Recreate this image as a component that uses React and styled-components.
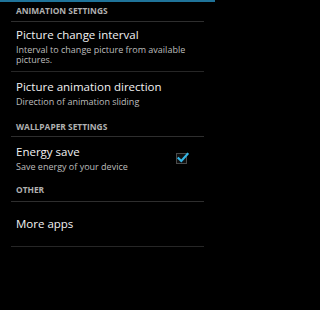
import React from "react";
import styled, { createGlobalStyle } from "styled-components";

const GlobalStyle = createGlobalStyle`
  html, body {
    margin: 0;
    padding: 0;
    background: #000;
  }
  body {
    font-family: "Open Sans", "Noto Sans", sans-serif;
    -webkit-font-smoothing: antialiased;
  }
`;

const Screen = styled.div`
  width: 215px;
  height: 310px;
  background: #000;
  border-top: 2px solid #1f7399;
  box-sizing: border-box;
  overflow: hidden;
`;

// category header with a divider under it
const Category = styled.div`
  margin: 0 11px;
  padding: 4px 5px 0;
  height: ${({ $height }) => $height}px;
  box-sizing: border-box;
  border-bottom: 1px solid #2e2e2e;
  color: #b0b0b0;
  font-size: 8.4px;
  font-weight: 700;
  line-height: 10px;
  white-space: nowrap;
`;

const Item = styled.div`
  margin: 0 11px;
  padding: ${({ $top }) => $top}px 5px 0;
  height: ${({ $height }) => $height}px;
  box-sizing: border-box;
  border-bottom: ${({ $divider }) => ($divider ? "1px solid #262626" : "none")};
  display: flex;
  align-items: flex-start;
  justify-content: space-between;
`;

const Texts = styled.div`
  display: flex;
  flex-direction: column;
`;

const Title = styled.div`
  color: #f2f2f2;
  font-size: 11.5px;
  line-height: 14px;
  white-space: nowrap;
`;

const Summary = styled.div`
  color: #bdbdbd;
  font-size: 9px;
  line-height: 10px;
  margin-top: 3px;
  white-space: nowrap;
`;

const CheckBox = styled.div`
  width: 11px;
  height: 11px;
  box-sizing: border-box;
  border: 1px solid #4a4a4a;
  background: #101010;
  margin: 8.5px 12px 0 0;
  position: relative;
  flex-shrink: 0;
  svg {
    position: absolute;
    left: -1px;
    top: -3px;
  }
`;

export default function App() {
  return (
    <>
      <GlobalStyle />
      <Screen>
        <Category $height={20}>ANIMATION SETTINGS</Category>
        <Item $top={6} $height={50} $divider>
          <Texts>
            <Title>Picture change interval</Title>
            <Summary>
              Interval to change picture from available
              <br />
              pictures.
            </Summary>
          </Texts>
        </Item>
        <Item $top={7.5} $height={46}>
          <Texts>
            <Title>Picture animation direction</Title>
            <Summary>Direction of animation sliding</Summary>
          </Texts>
        </Item>
        <Category $height={19}>WALLPAPER SETTINGS</Category>
        <Item $top={7.5} $height={44}>
          <Texts>
            <Title>Energy save</Title>
            <Summary>Save energy of your device</Summary>
          </Texts>
          <CheckBox>
            <svg width="13" height="13" viewBox="0 0 13 13">
              <path d="M2.5 7.2 L5.3 10 L11.5 3" fill="none" stroke="#33b5e5" strokeWidth="2.2" strokeLinecap="square" />
            </svg>
          </CheckBox>
        </Item>
        <Category $height={21}>OTHER</Category>
        <Item $top={14.5} $height={45} $divider>
          <Texts>
            <Title>More apps</Title>
          </Texts>
        </Item>
      </Screen>
    </>
  );
}
